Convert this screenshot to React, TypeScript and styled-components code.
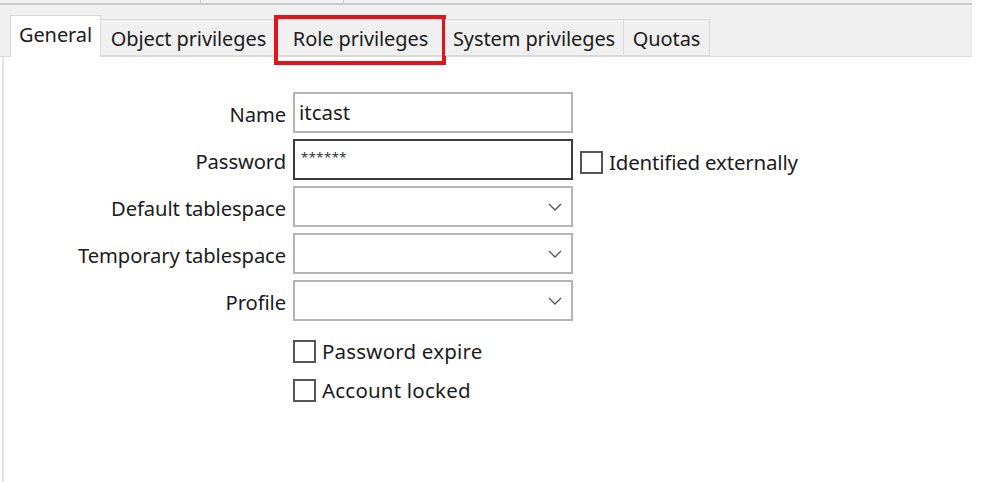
import React from "react";
import styled, { createGlobalStyle } from "styled-components";

const Global = createGlobalStyle`
  html, body { margin: 0; padding: 0; background: #ffffff; }
  body { font-family: "Noto Sans", "Open Sans", sans-serif; color: #1b1b1b; }
`;

const Window = styled.div`
  width: 972px;
  height: 482px;
  display: flex;
  flex-direction: column;
  background: #ffffff;
`;

const TopStrip = styled.div`
  height: 3px;
  background: #f0f0f0;
  border-bottom: 2px solid #c9c9c9;
  display: flex;
`;

const TopCell = styled.div<{ $w: number }>`
  width: ${(p) => p.$w}px;
  border-right: 1px solid #c9c9c9;
`;

const TabBar = styled.div`
  height: 52px;
  background: #f0f0f0;
  display: flex;
  align-items: flex-end;
  padding-left: 10px;
  box-sizing: border-box;
  border-bottom: 1px solid #dadada;
  border-right: 1px solid #e4e4e4;
`;

const Tab = styled.div<{ $active?: boolean; $w: number }>`
  position: relative;
  box-sizing: border-box;
  width: ${(p) => p.$w}px;
  height: ${(p) => (p.$active ? 42 : 37)}px;
  margin-bottom: ${(p) => (p.$active ? -1 : 0)}px;
  background: ${(p) => (p.$active ? "#ffffff" : "#f0f0f0")};
  border: 1px solid #d9d9d9;
  border-bottom: ${(p) => (p.$active ? "none" : "1px solid #d9d9d9")};
  border-left: ${(p) => (p.$active ? "1px solid #d9d9d9" : "none")};
  display: flex;
  align-items: ${(p) => (p.$active ? "flex-start" : "center")};
  justify-content: center;
  padding-top: ${(p) => (p.$active ? 5 : 2)}px;
  font-size: 20px;
  letter-spacing: -0.1px;
  white-space: nowrap;
  color: #1b1b1b;
`;

const Highlight = styled.div`
  position: absolute;
  left: -3px;
  right: -2px;
  top: -5px;
  bottom: -10px;
  border: 4px solid #e0141a;
  pointer-events: none;
`;

const Body = styled.div`
  flex: 1;
  margin-left: 2px;
  border-left: 2px solid #e3e3e3;
  padding-top: 35px;
`;

const Form = styled.div`
  display: grid;
  grid-template-columns: 282px 280px auto;
  column-gap: 7px;
  row-gap: 6px;
  align-items: center;
`;

const Label = styled.div`
  text-align: right;
  font-size: 20.2px;
  letter-spacing: -0.1px;
  white-space: nowrap;
  padding-top: 2px;
`;

const TextBox = styled.div<{ $focused?: boolean }>`
  box-sizing: border-box;
  height: 41px;
  border: 2px solid ${(p) => (p.$focused ? "#3c3c3c" : "#b4b4b4")};
  background: #fff;
  padding: 4px 4px 0 4px;
  font-size: 20.5px;
  display: flex;
  align-items: flex-start;
  position: relative;
`;

const Masked = styled.span`
  font-size: 13px;
  letter-spacing: 0.5px;
  color: #333;
  line-height: 14px;
  margin-top: 5px;
  margin-left: 2px;
`;

const Chevron = styled.svg`
  position: absolute;
  right: 9px;
  top: 15px;
`;

const Check = styled.label`
  display: flex;
  align-items: center;
  gap: 6px;
  font-size: 20.5px;
  letter-spacing: 0.2px;
  white-space: nowrap;
`;

const Box = styled.span`
  box-sizing: border-box;
  width: 23px;
  height: 23px;
  border: 2px solid #555;
  background: #fff;
  display: inline-block;
`;

const SideCheck = styled(Check)`
  padding-top: 5px;
  letter-spacing: -0.2px;
`;

const CheckCol = styled.div`
  grid-column: 2 / span 2;
  display: flex;
  flex-direction: column;
  gap: 11px;
  padding-top: 10px;
`;

const Empty = styled.div``;

const Drop = () => (
  <TextBox>
    <Chevron width="14" height="8" viewBox="0 0 14 8">
      <path d="M1 1 L7 7 L13 1" fill="none" stroke="#555" strokeWidth="1.3" />
    </Chevron>
  </TextBox>
);

export default function App() {
  return (
    <>
      <Global />
      <Window>
        <TopStrip>
          <TopCell $w={200} />
          <TopCell $w={142} />
        </TopStrip>
        <TabBar>
          <Tab $active $w={91}>General</Tab>
          <Tab $w={176}>Object privileges</Tab>
          <Tab $w={168}>
            Role privileges
            <Highlight />
          </Tab>
          <Tab $w={179}>System privileges</Tab>
          <Tab $w={86}>Quotas</Tab>
        </TabBar>
        <Body>
          <Form>
            <Label>Name</Label>
            <TextBox>itcast</TextBox>
            <Empty />
            <Label>Password</Label>
            <TextBox $focused>
              <Masked>******</Masked>
            </TextBox>
            <SideCheck>
              <Box />
              Identified externally
            </SideCheck>
            <Label>Default tablespace</Label>
            <Drop />
            <Empty />
            <Label>Temporary tablespace</Label>
            <Drop />
            <Empty />
            <Label>Profile</Label>
            <Drop />
            <Empty />
            <CheckCol>
              <Check>
                <Box />
                Password expire
              </Check>
              <Check>
                <Box />
                Account locked
              </Check>
            </CheckCol>
          </Form>
        </Body>
      </Window>
    </>
  );
}
